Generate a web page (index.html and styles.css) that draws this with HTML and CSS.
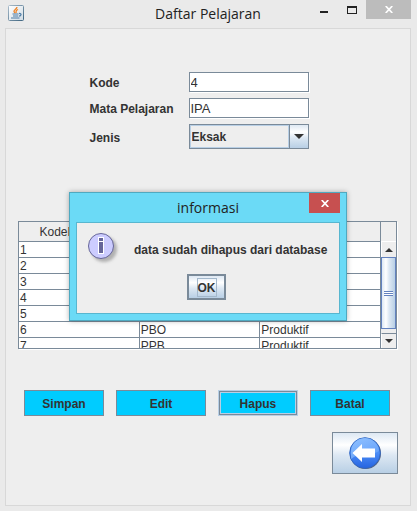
FILE: index.html
```html
<!DOCTYPE html>
<html lang="id">
<head>
<meta charset="utf-8">
<meta name="viewport" content="width=device-width, initial-scale=1">
<title>Daftar Pelajaran</title>
<link rel="stylesheet" href="styles.css">
</head>
<body>
<div class="window">
  <header class="titlebar">
    <svg class="app-icon" width="16" height="16" viewBox="0 0 16 16" aria-hidden="true">
      <defs>
        <linearGradient id="tile" x1="0" y1="0" x2="1" y2="1">
          <stop offset="0" stop-color="#ffffff"/><stop offset="1" stop-color="#cfdbe4"/>
        </linearGradient>
        <linearGradient id="tileEdge" x1="0" y1="0" x2="1" y2="1">
          <stop offset="0" stop-color="#a9bccb"/><stop offset="1" stop-color="#3f6580"/>
        </linearGradient>
      </defs>
      <rect x=".5" y=".5" width="15" height="15" rx="1" fill="url(#tile)" stroke="url(#tileEdge)"/>
      <path d="M9 2C9 4 5.500 5 6 6.500C6.200 7.300 7 7.500 7.200 8.200M10 4.500C8 5.500 7.600 6.200 8.500 7.800" fill="none" stroke="#f08427" stroke-width="1.300"/>
      <path d="M4.500 9H10.500M5 11H10M11 8.500C14 8 13.500 11 10.800 11.200M3 13H11.500" fill="none" stroke="#4f7da6" stroke-width="1.200"/>
    </svg>
    <h1 class="title">Daftar Pelajaran</h1>
    <div class="controls">
      <button class="control" type="button" aria-label="Minimize"><span class="minimize"></span></button>
      <button class="control" type="button" aria-label="Maximize"><span class="maximize"></span></button>
      <button class="control close" type="button" aria-label="Close">
        <svg width="8" height="7" viewBox="0 0 8 7" aria-hidden="true"><path d="M.7 0L7.300 7M7.300 0L.7 7" stroke="#fff" stroke-width="1.700"/></svg>
      </button>
    </div>
  </header>

  <main class="panel">
    <form class="fields">
      <label for="kode">Kode</label>
      <input class="text-field" id="kode" type="text" value="4">
      <label for="mapel">Mata Pelajaran</label>
      <input class="text-field" id="mapel" type="text" value="IPA">
      <label for="jenis">Jenis</label>
      <div class="combo">
        <select id="jenis"><option>Eksak</option></select>
        <span class="combo-arrow"><svg width="10" height="5" viewBox="0 0 10 5" aria-hidden="true"><path d="M0 0H10L5 5Z" fill="#333"/></svg></span>
      </div>
    </form>

    <div class="grid-pane">
      <div class="viewport">
        <table>
          <thead><tr><th scope="col">KodePelajaran</th><th></th><th></th></tr></thead>
          <tbody>
            <tr><td>1</td><td></td><td></td></tr>
            <tr><td>2</td><td></td><td></td></tr>
            <tr><td>3</td><td></td><td></td></tr>
            <tr><td>4</td><td></td><td></td></tr>
            <tr><td>5</td><td></td><td></td></tr>
            <tr><td>6</td><td>PBO</td><td>Produktif</td></tr>
            <tr><td>7</td><td>PPB</td><td>Produktif</td></tr>
          </tbody>
        </table>
      </div>
      <div class="scrollbar">
        <span class="corner"></span>
        <button class="scroll-button" type="button" aria-label="Scroll up"><svg width="8" height="4" viewBox="0 0 8 4" aria-hidden="true"><path d="M0 4H8L4 0Z" fill="#333"/></svg></button>
        <span class="thumb"><span class="grip"></span></span>
        <button class="scroll-button down" type="button" aria-label="Scroll down"><svg width="8" height="4" viewBox="0 0 8 4" aria-hidden="true"><path d="M0 0H8L4 4Z" fill="#333"/></svg></button>
      </div>
    </div>

    <div class="actions">
      <button class="action" type="button">Simpan</button>
      <button class="action wide" type="button">Edit</button>
      <button class="action focused" type="button">Hapus</button>
      <button class="action" type="button">Batal</button>
    </div>

    <button class="back" type="button" aria-label="Kembali">
      <svg width="34" height="34" viewBox="0 0 34 34" aria-hidden="true">
        <defs>
          <linearGradient id="ball" x1="0" y1="0" x2="0" y2="1">
            <stop offset="0" stop-color="#72adff"/><stop offset=".5" stop-color="#4c8df6"/><stop offset="1" stop-color="#2563e0"/>
          </linearGradient>
          <linearGradient id="gloss" x1="0" y1="0" x2="1" y2="1">
            <stop offset="0" stop-color="#9cc9ff"/><stop offset="1" stop-color="#68a4fb"/>
          </linearGradient>
        </defs>
        <circle cx="17.500" cy="17.500" r="15.500" fill="#56617a"/>
        <circle cx="17" cy="17" r="15.300" fill="url(#ball)" stroke="#3268c4"/>
        <path d="M3 17A14 14 0 0 1 31 15C24 20 13 15 3 23Z" fill="url(#gloss)" opacity=".75"/>
        <path d="M4.500 17L14 8V12.500H27V21.500H14V26Z" fill="#fff"/>
      </svg>
    </button>
  </main>

  <div class="overlay">
    <section class="dialog" role="dialog" aria-labelledby="dialog-title">
      <header class="dialog-bar">
        <h2 class="title" id="dialog-title">informasi</h2>
        <button class="dialog-close" type="button" aria-label="Close">
          <svg width="8" height="7" viewBox="0 0 8 7" aria-hidden="true"><path d="M.7 0L7.300 7M7.300 0L.7 7" stroke="#fff" stroke-width="1.700"/></svg>
        </button>
      </header>
      <div class="dialog-body">
        <div class="message">
          <svg width="32" height="32" viewBox="0 0 32 32" aria-hidden="true">
            <defs><filter id="soft" x="-20%" y="-20%" width="140%" height="140%"><feGaussianBlur stdDeviation="1.500"/></filter></defs>
            <circle cx="16" cy="16" r="13" fill="#888" opacity=".6" filter="url(#soft)"/>
            <circle cx="13" cy="13" r="12.500" fill="#ccccff" stroke="#666699"/>
            <rect x="10.500" y="4.500" width="5" height="4" fill="#666699" stroke="#fff"/>
            <rect x="10.500" y="8.500" width="5" height="12" fill="#666699" stroke="#fff"/>
          </svg>
          <p>data sudah dihapus dari database</p>
        </div>
        <button class="ok" type="button"><span>OK</span></button>
      </div>
    </section>
  </div>
</div>
</body>
</html>
```
FILE: styles.css
```css
:root {
  --edge: #7a8a99;
  --face: #eeeeee;
  --ink: #333333;
  --soft-blue: #b8cfe5;
  --metal: linear-gradient(#dde8f3 0%, #ffffff 30%, #dde8f3 55%, #b8cfe5 100%);
}

* { box-sizing: border-box; }

body {
  margin: 0;
  color: var(--ink);
  font: 12px/16px "Liberation Sans", Arial, sans-serif;
}

button, input, select { font: inherit; color: inherit; margin: 0; padding: 0; }
button { display: flex; align-items: center; justify-content: center; border: 0; }
h1, h2, p { margin: 0; }
svg { display: block; flex: none; }

.window {
  position: relative;
  display: flex;
  flex-direction: column;
  min-height: 100vh;
  padding: 0 6px 5px 5px;
  background: #eaeaea;
}

.titlebar {
  display: grid;
  grid-template-columns: 1fr auto 1fr;
  height: 28px;
}

.app-icon { margin: 5px 3px; }

.title {
  font: 14px/20px "Open Sans", "Noto Sans", sans-serif;
  color: #222;
}

.titlebar .title { padding-top: 4px; }

.controls { display: flex; justify-content: flex-end; }
.control { width: 28px; height: 19px; background: transparent; }
.close { width: 45px; background: #bcbcbc; }
.minimize { width: 8px; height: 2px; margin-top: 5px; background: #222; }
.maximize { width: 10px; height: 8px; border: 1px solid #222; border-top-width: 2px; }

.panel {
  display: flex;
  flex: 1;
  flex-direction: column;
  padding: 43px 13px 0 12px;
  border: 1px solid #d8d8d8;
  background: var(--face);
}

.fields {
  display: grid;
  grid-template-columns: 99px minmax(0, 120px);
  row-gap: 6px;
  align-items: center;
  justify-content: center;
  padding-right: 17px;
  font-weight: bold;
}

.fields label { padding-top: 2px; }

.text-field {
  width: 100%;
  height: 20px;
  padding: 0 1px;
  border: 1px solid var(--edge);
  box-shadow: 1px 1px 0 #fff;
  background: #fff;
  font-weight: normal;
  font-size: 13px;
  outline: 0;
}

.combo {
  display: flex;
  height: 25px;
  border: 1px solid var(--edge);
  background: var(--face);
}

.combo select {
  flex: 1;
  min-width: 0;
  padding: 0 1px;
  border: 1px solid var(--soft-blue);
  border-radius: 0;
  appearance: none;
  background: var(--face);
  font-weight: bold;
}

.combo-arrow {
  display: flex;
  align-items: center;
  justify-content: center;
  width: 19px;
  border-left: 1px solid var(--edge);
  background: var(--metal);
}

.grid-pane {
  display: flex;
  height: 128px;
  margin-top: 72px;
  border: 1px solid var(--edge);
  box-shadow: 1px 1px 0 #fff;
}

.viewport { flex: 1; overflow: hidden; background: #fff; }

table {
  width: 100%;
  table-layout: fixed;
  border-collapse: separate;
  border-spacing: 0;
}

th, td {
  height: 16px;
  padding: 2px 1px 0;
  border: 0 solid var(--edge);
  border-width: 0 1px 1px 0;
  font-weight: normal;
  line-height: 13px;
  text-align: left;
}

th { height: 20px; background: var(--face); text-align: center; }

.scrollbar {
  display: flex;
  flex-direction: column;
  width: 15px;
  background: var(--face);
}

.corner { height: 20px; border-bottom: 1px solid #fff; }
.scroll-button { height: 15px; background: var(--face); border-left: 1px solid #fff; }
.down { border-top: 1px solid var(--edge); }

.thumb {
  display: flex;
  flex: 1;
  align-items: center;
  justify-content: center;
  margin-bottom: 4px;
  border: 1px solid #6382bf;
  background: linear-gradient(90deg, #dde8f3, #fff 30%, #dde8f3 55%, #b8cfe5);
}

.grip {
  width: 9px;
  height: 5px;
  background: repeating-linear-gradient(#6382bf 0 1px, #fff 1px 2px);
}

.actions {
  display: flex;
  gap: 12px;
  margin-top: 41px;
  padding: 0 7px 0 6px;
}

.action {
  flex: 80 1 0;
  height: 26px;
  padding-top: 2px;
  border: 1px solid var(--edge);
  background: #00ccff;
  font-weight: bold;
}

.wide { flex-grow: 90; }

.focused {
  border-color: var(--soft-blue);
  box-shadow: inset 0 0 0 1px var(--edge), inset 0 0 0 2px var(--soft-blue);
}

.back {
  align-self: flex-end;
  width: 66px;
  height: 42px;
  margin: 16px -1px 0 0;
  border: 1px solid var(--edge);
  background: var(--metal);
}

.overlay {
  position: absolute;
  inset: 192px 1px auto 0;
  display: flex;
  justify-content: center;
}

.dialog {
  width: 278px;
  padding: 0 6px 6px;
  border: 1px solid #4fa9c0;
  background: #6bdaf6;
  box-shadow: 0 0 5px rgba(0, 0, 0, 0.3);
}

.dialog-bar {
  display: grid;
  grid-template-columns: 1fr auto 1fr;
  height: 29px;
}

.dialog-bar .title { grid-column: 2; padding-top: 5px; }

.dialog-close {
  justify-self: end;
  width: 31px;
  height: 20px;
  background: #c75050;
}

.dialog-body {
  display: flex;
  flex-direction: column;
  align-items: center;
  gap: 9px;
  padding: 10px 14px 13px 11px;
  border: 1px solid #58b6cf;
  background: var(--face);
}

.message {
  display: flex;
  gap: 14px;
  align-items: center;
  align-self: stretch;
  font-weight: bold;
  white-space: nowrap;
}

.message p { padding-top: 2px; }

.ok {
  width: 39px;
  height: 26px;
  border: 2px solid var(--edge);
  background: var(--metal);
  font-weight: bold;
}

.ok span { padding-top: 1px; border: 1px solid #a3b8cc; }
```
